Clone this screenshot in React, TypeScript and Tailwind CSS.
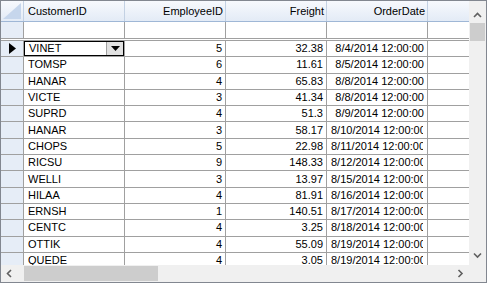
import React from "react";

const rows: [string, number, string, string][] = [
  ["VINET", 5, "32.38", "8/4/2014 12:00:00"],
  ["TOMSP", 6, "11.61", "8/5/2014 12:00:00"],
  ["HANAR", 4, "65.83", "8/8/2014 12:00:00"],
  ["VICTE", 3, "41.34", "8/8/2014 12:00:00"],
  ["SUPRD", 4, "51.3", "8/9/2014 12:00:00"],
  ["HANAR", 3, "58.17", "8/10/2014 12:00:00"],
  ["CHOPS", 5, "22.98", "8/11/2014 12:00:00"],
  ["RICSU", 9, "148.33", "8/12/2014 12:00:00"],
  ["WELLI", 3, "13.97", "8/15/2014 12:00:00"],
  ["HILAA", 4, "81.91", "8/16/2014 12:00:00"],
  ["ERNSH", 1, "140.51", "8/17/2014 12:00:00"],
  ["CENTC", 4, "3.25", "8/18/2014 12:00:00"],
  ["OTTIK", 4, "55.09", "8/19/2014 12:00:00"],
  ["QUEDE", 4, "3.05", "8/19/2014 12:00:00"],
];

function Chevron({ dir }: { dir: "up" | "down" | "left" | "right" }) {
  const d =
    dir === "up"
      ? "M1 5 L4.5 1.5 L8 5"
      : dir === "down"
      ? "M1 1.5 L4.5 5 L8 1.5"
      : dir === "left"
      ? "M5 1 L1.5 4.5 L5 8"
      : "M1.5 1 L5 4.5 L1.5 8";
  const w = dir === "up" || dir === "down" ? 9 : 7;
  const h = dir === "up" || dir === "down" ? 7 : 9;
  return (
    <svg width={w} height={h} viewBox={`0 0 ${w} ${h}`}>
      <path d={d} fill="none" stroke="#606060" strokeWidth="1.6" />
    </svg>
  );
}

export default function App() {
  const font = { fontFamily: '"Liberation Sans", Arial, sans-serif' };
  return (
    <div className="w-[491px] h-[289px] bg-white" style={font}>
      <div className="w-[487px] h-[283px] border border-[#828790] flex flex-col text-[11px] text-black leading-none">
        <div className="flex flex-1 min-h-0">
          {/* grid */}
          <div className="w-[468px] flex flex-col overflow-hidden">
            {/* header */}
            <div className="h-[21px] flex shrink-0 border-b border-[#9fb7d6] bg-gradient-to-b from-[#f7f9fd] to-[#e3ebf6]">
              <div className="w-[23px] shrink-0 border-r border-[#c3d1e3] relative">
                <svg className="absolute left-[2px] top-[2px]" width="18" height="16" viewBox="0 0 18 16">
                  <path d="M18 0 L18 16 L0 16 Z" fill="#c6d6ec" />
                </svg>
              </div>
              <div className="w-[101px] shrink-0 border-r border-[#c3d1e3] flex items-center pl-[4px] pt-[1px]">CustomerID</div>
              <div className="w-[101px] shrink-0 border-r border-[#c3d1e3] flex items-center justify-end pr-[2px] pt-[1px]">EmployeeID</div>
              <div className="w-[101px] shrink-0 border-r border-[#c3d1e3] flex items-center justify-end pr-[2px] pt-[1px]">Freight</div>
              <div className="w-[101px] shrink-0 border-r border-[#c3d1e3] flex items-center justify-end pr-[2px] pt-[1px]">OrderDate</div>
              <div className="flex-1" />
            </div>
            {/* frozen empty row */}
            <div className="h-[17px] flex shrink-0 border-b border-[#a0a0a0]">
              <div className="w-[23px] shrink-0 border-r border-[#a0a0a0] bg-[#e6edf7]" />
              <div className="w-[101px] shrink-0 border-r border-[#a0a0a0]" />
              <div className="w-[101px] shrink-0 border-r border-[#a0a0a0]" />
              <div className="w-[101px] shrink-0 border-r border-[#a0a0a0]" />
              <div className="w-[101px] shrink-0 border-r border-[#a0a0a0]" />
              <div className="flex-1" />
            </div>
            <div className="h-[2px] shrink-0 border-b border-[#a0a0a0] bg-white" />
            {/* data */}
            <div className="flex-1 min-h-0 overflow-hidden">
              {rows.map((r, i) => {
                const long = r[3].length > 17;
                return (
                  <div key={i} className="h-[16.3px] flex border-b border-[#a0a0a0]">
                    <div className="w-[23px] shrink-0 border-r border-[#a0a0a0] bg-[#e6edf7] flex items-center pl-[8px]">
                      {i === 0 && (
                        <svg width="7" height="11" viewBox="0 0 7 11">
                          <path d="M0 0 L7 5.5 L0 11 Z" fill="#000" />
                        </svg>
                      )}
                    </div>
                    {i === 0 ? (
                      <div className="w-[101px] shrink-0 border-r border-[#a0a0a0] flex">
                        <div className="flex-1 border border-black flex items-center pl-[4px] bg-white">
                          <span className="flex-1">{r[0]}</span>
                          <div className="w-[17px] h-full bg-[#e1e1e1] border-l border-[#a0a0a0] flex items-center justify-center">
                            <svg width="9" height="5" viewBox="0 0 9 5">
                              <path d="M0 0 L9 0 L4.5 5 Z" fill="#000" />
                            </svg>
                          </div>
                        </div>
                      </div>
                    ) : (
                      <div className="w-[101px] shrink-0 border-r border-[#a0a0a0] flex items-center pl-[4px]">{r[0]}</div>
                    )}
                    <div className="w-[101px] shrink-0 border-r border-[#a0a0a0] flex items-center justify-end pr-[3px]">{r[1]}</div>
                    <div className="w-[101px] shrink-0 border-r border-[#a0a0a0] flex items-center justify-end pr-[3px]">{r[2]}</div>
                    {long ? (
                      <div className="w-[101px] shrink-0 border-r border-[#a0a0a0] flex items-center pl-[4px] pr-[4px]">
                        <div className="w-full overflow-hidden whitespace-nowrap">{r[3]}</div>
                      </div>
                    ) : (
                      <div className="w-[101px] shrink-0 border-r border-[#a0a0a0] flex items-center justify-end pr-[3px] whitespace-nowrap">{r[3]}</div>
                    )}
                    <div className="flex-1" />
                  </div>
                );
              })}
            </div>
          </div>
          {/* vertical scrollbar */}
          <div className="w-[17px] bg-[#f0f0f0] flex flex-col">
            <div className="h-[22px] flex justify-center pt-[11px]">
              <Chevron dir="up" />
            </div>
            <div className="h-[18px] mx-[1px] bg-[#cdcdcd]" />
            <div className="flex-1" />
            <div className="h-[17px] flex items-center justify-center pb-[2px]">
              <Chevron dir="down" />
            </div>
          </div>
        </div>
        {/* horizontal scrollbar */}
        <div className="h-[17px] flex shrink-0 bg-[#f0f0f0]">
          <div className="w-[17px] flex items-center justify-center">
            <Chevron dir="left" />
          </div>
          <div className="flex-1 flex items-center">
            <div className="ml-[6px] w-[134px] h-[15px] bg-[#cdcdcd]" />
          </div>
          <div className="w-[17px] flex items-center justify-center">
            <Chevron dir="right" />
          </div>
          <div className="w-[17px] bg-[#f0f0f0]" />
        </div>
      </div>
    </div>
  );
}
